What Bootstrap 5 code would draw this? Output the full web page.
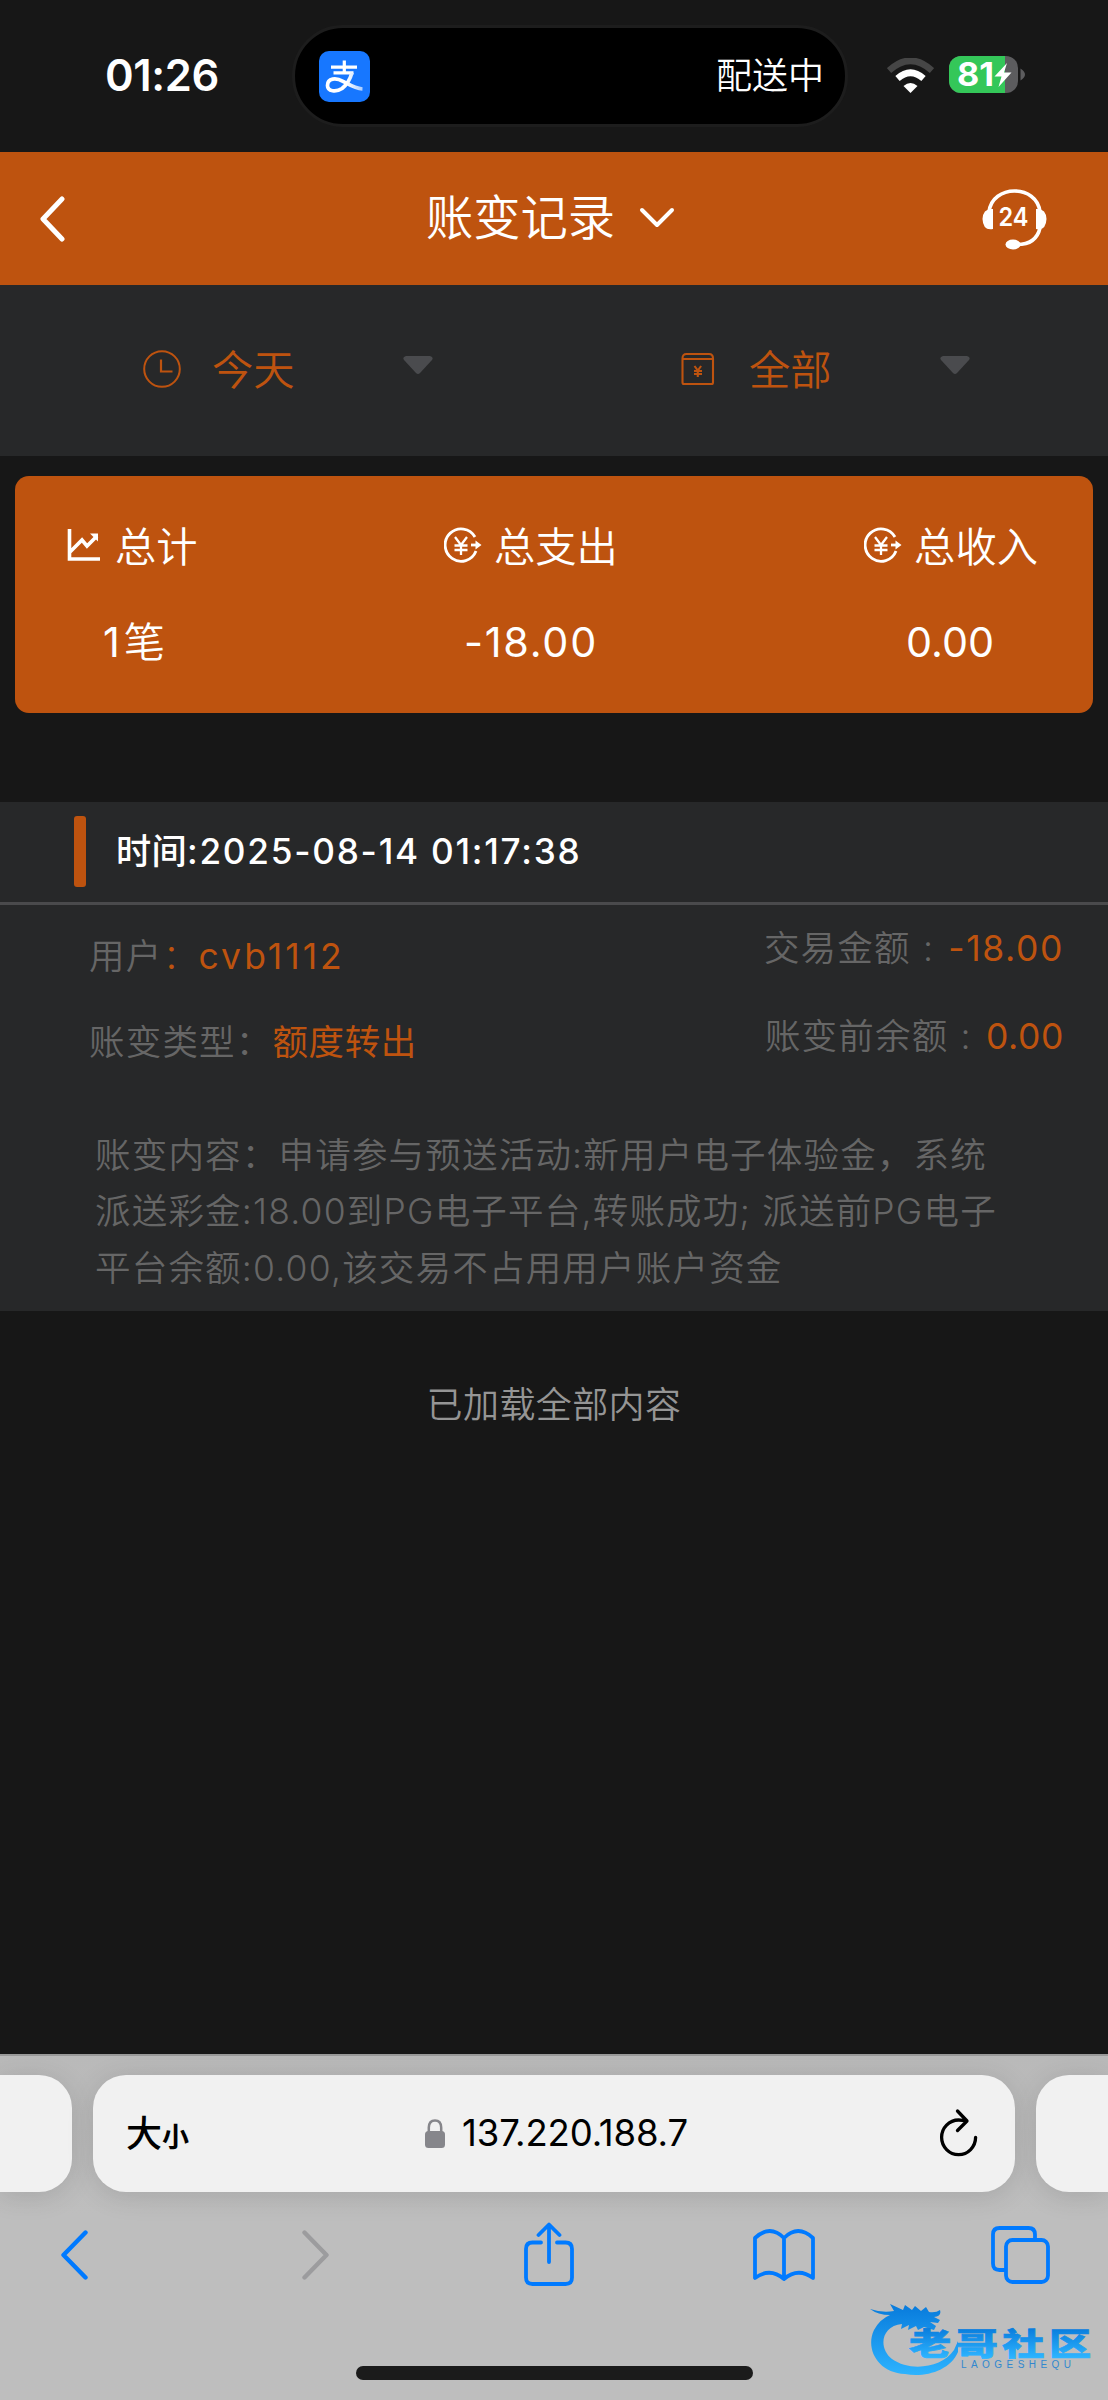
<!DOCTYPE html>
<html lang="zh-CN">
<head>
<meta charset="utf-8">
<meta name="viewport" content="width=device-width, initial-scale=1">
<title>账变记录</title>
<link href="https://cdn.jsdelivr.net/npm/bootstrap@5.3.0/dist/css/bootstrap.min.css" rel="stylesheet">
<style>
:root{--brand:#be530f;--panel:#272829;--page:#171717;--dim:#666;--ios:#007aff}
body{font-family:Inter,"Noto Sans CJK SC",sans-serif;background:var(--page);color:#fff;height:2400px;font-weight:350;overflow:hidden}
svg{display:block;flex:none}
.statusbar{height:152px;padding-left:105px}
.clock-text{font-size:43.5px;font-weight:600;line-height:1;width:187px;letter-spacing:-.4px}
.island{width:556px;height:102px;border:3px solid #1d1d1d;border-radius:51px;background:#000;padding:0 21px 0 24px;font-size:36px}
.topbar{height:133px;background:var(--brand);padding:0 61px 0 39px}
.topbar-title{font-size:47.3px;line-height:60px;padding-bottom:2px;margin-left:54px}
.filters{height:170.5px;background:var(--panel);color:var(--brand);font-size:41.3px;line-height:60px}
.filters svg{margin-bottom:2px}
.filter-a{padding-left:143px}
.filter-b{padding-left:127px}
.summary{margin:20.5px 15px 0;height:237px;border-radius:14px;background:var(--brand);font-size:41.3px;line-height:60px;padding:41px 55px 0 52px}
.sum-value{margin-top:35px;font-weight:400}
.record{margin-top:88.5px;height:509px;background:var(--panel);font-size:35.5px;color:var(--dim);letter-spacing:1.2px}
.record-head{height:103px;border-bottom:3px solid #4a4a4c;color:#fff;padding-left:74px;font-weight:500;font-size:35.2px;letter-spacing:1.75px}
.head-mark{width:12px;height:71px;background:var(--brand);border-radius:3px;margin-right:30px}
.pairs{height:196px;padding:24px 44px 0 89px;line-height:56px}
.pairs .line-l{margin-bottom:30px}
.pairs .col-r{margin-top:-8px}
.pairs .line-r{margin-bottom:32px}
.colon{margin:0 3px 0 1px}
.val{color:var(--brand);font-weight:400;letter-spacing:.6px}
.val-wide{letter-spacing:3px}
.val-neg{letter-spacing:1.6px}
.detail{padding:27px 0 0 95px;line-height:56.5px;white-space:nowrap}
.loaded{margin-top:66px;font-size:36px;letter-spacing:.4px;line-height:56px;color:#959595}
.browser{height:346px;background:linear-gradient(#b9b9b9,#bebebe 160px);border-top:2px solid #999;padding-top:19px}
.tab-pill{height:117px;background:#f1f1f1;border-radius:33px;box-shadow:0 4px 28px rgba(0,0,0,.12)}
.tab-main{width:922px;color:#000;padding:0 37px 0 33px}
.tab-prev{width:72px;border-radius:0 33px 33px 0}
.tab-next{width:72px;border-radius:33px 0 0 33px}
.host{font-size:36.5px;letter-spacing:-.15px;font-weight:400}
.tools{height:126px;padding:0 0 0 60px}
.home-pill{width:397px;height:14px;border-radius:7px;background:#1b1b1b;margin:48px auto 0}
.site-mark{right:12px;bottom:20px}
</style>
<script src="https://cdn.jsdelivr.net/npm/bootstrap@5.3.0/dist/js/bootstrap.bundle.min.js"></script>
</head>
<body class="d-flex flex-column position-relative">
<svg width="0" height="0" class="position-absolute"><defs>
<symbol id="coin" viewBox="0 0 38 36"><g fill="none" stroke="currentColor" stroke-width="2.8"><path d="M31 10A16 16.2 0 1 0 32 24"/><path d="M11 10l6 8 6-8M17 18v10M10.5 18.5h13M10.5 23h13" stroke-width="2.3"/><path d="M27 18h7"/></g><path d="M31.5 13.5l6 4.5-6 4.5z" fill="currentColor"/></symbol>
<symbol id="caret" viewBox="0 0 30 18"><path d="M3 0h24q4 1 2 4L17 17q-2 2-4 0L1 4Q-1 1 3 0z" fill="#4a4b4e"/></symbol>
</defs></svg>

<header class="statusbar d-flex align-items-center flex-shrink-0">
  <div class="clock-text">01:26</div>
  <div class="island d-flex align-items-center justify-content-between">
    <svg width="51" height="51" viewBox="0 0 51 51"><defs><linearGradient id="fade"><stop offset=".55" stop-color="#fff"/><stop offset="1" stop-color="#a9ccff"/></linearGradient></defs><rect width="51" height="51" rx="10" fill="#1777ff"/><path d="M12 16.200h26M14.500 21.800h20M25.300 9.500v12" stroke="#fff" stroke-width="3.200" fill="none"/><path d="M33 21.500C31 29 27.500 34 23 37.500 17 41.500 8.500 40.500 8.500 34.500 8.500 27 17 26.500 24 30.300 31 34 36 37.500 43.500 38" stroke="url(#fade)" stroke-width="3.700" fill="none"/></svg>
    <span>配送中</span>
  </div>
  <svg class="ms-auto" style="margin-right:15px" width="47" height="36" viewBox="0 0 47 36"><path d="M2 12.500Q23.500-7 45 12.500" fill="none" stroke="#464646" stroke-width="6.500"/><path d="M10.500 20.500Q23.500 9 36.500 20.500" fill="none" stroke="#fff" stroke-width="6.500"/><path d="M16.500 28Q23.500 22 30.500 28L23.500 35z" fill="#fff"/></svg>
  <svg style="margin-right:83px;margin-bottom:3px" width="76" height="37" viewBox="0 0 76 37"><defs><clipPath id="cell"><rect width="69" height="37" rx="12"/></clipPath></defs><g clip-path="url(#cell)"><path fill="#5c5c5e" d="M0 0h69v37H0z"/><path fill="#34c759" d="M0 0h56v37H0z"/></g><path d="M71.500 12.500q9 6 0 12z" fill="#5c5c5e"/><text x="8" y="30" font-size="32" font-weight="700" fill="#fff" textLength="37" lengthAdjust="spacingAndGlyphs">81</text><path d="M58 7L45.500 20.500h7L49.500 31 62.500 16.500h-7.500z" fill="#fff"/></svg>
</header>

<nav class="topbar d-flex align-items-center justify-content-between flex-shrink-0">
  <svg width="26" height="46" viewBox="0 0 26 46"><path d="M23 3L4 23l19 20" fill="none" stroke="#fff" stroke-width="5" stroke-linecap="round" stroke-linejoin="round"/></svg>
  <div class="d-flex align-items-center topbar-title"><span>账变记录</span><svg style="margin-left:24px" width="36" height="22" viewBox="0 0 36 22"><path d="M3 3l15 15L33 3" fill="none" stroke="#fff" stroke-width="4" stroke-linecap="round" stroke-linejoin="round"/></svg></div>
  <svg width="65" height="62" viewBox="0 0 65 62"><path d="M7 24C10-4 55-4 58 24M58 40Q54 57 34 56.500" fill="none" stroke="#fff" stroke-width="3.600"/><path d="M11 21v20Q1 43 .5 31 1 20 11 21zM54 21v20Q64 43 64.500 31 64 20 54 21z" fill="#fff"/><ellipse cx="31" cy="56.500" rx="7.500" ry="5" fill="#fff"/><text x="16.500" y="37.500" font-size="26" font-weight="600" fill="#fff" textLength="30" lengthAdjust="spacingAndGlyphs">24</text></svg>
</nav>

<section class="filters row g-0 align-items-center flex-shrink-0">
  <div class="col-6 d-flex align-items-center filter-a">
    <svg width="38" height="38" viewBox="0 0 38 38"><circle cx="19" cy="19" r="17.800" fill="none" stroke="#be530f" stroke-width="2"/><path d="M18 9.500v12h11.500" fill="none" stroke="#be530f" stroke-width="2.200"/></svg>
    <span style="margin-left:31px">今天</span><svg style="margin-left:108px;margin-bottom:11px" width="30" height="18"><use href="#caret"/></svg>
  </div>
  <div class="col-6 d-flex align-items-center filter-b">
    <svg width="34" height="34" viewBox="0 0 34 34"><path d="M1.500 6.500q0-4.500 4-4.500h22.500q4 0 4 4.500v24q0 1.500-1.500 1.500h-27.500q-1.500 0-1.500-1.500zM2 7h30M13.500 14l3.300 4.500 3.300-4.500M16.800 18.500v6.500M13 19h8M13 22h8" fill="none" stroke="#be530f" stroke-width="2.100"/></svg>
    <span style="margin-left:34px">全部</span><svg style="margin-left:108px;margin-bottom:11px" width="30" height="18"><use href="#caret"/></svg>
  </div>
</section>

<section class="summary d-flex justify-content-between flex-shrink-0">
  <div><div class="d-flex align-items-center"><svg style="margin:0 15px 4px 0" width="33" height="33" viewBox="0 0 33 33"><path d="M2.500 0v30H33M3 23l12-12 5 6 10-10" fill="none" stroke="#fff" stroke-width="3.600"/><path d="M23 4.500h8v8z" fill="#fff"/></svg>总计</div><div class="sum-value" style="padding-left:36px"><span style="letter-spacing:4px">1</span><span style="font-weight:350">笔</span></div></div>
  <div><div class="d-flex align-items-center"><svg style="margin:0 12px 4px 0" width="38" height="36"><use href="#coin"/></svg>总支出</div><div class="sum-value" style="padding-left:20px;letter-spacing:1.8px">-18.00</div></div>
  <div><div class="d-flex align-items-center"><svg style="margin:0 12px 4px 0" width="38" height="36"><use href="#coin"/></svg>总收入</div><div class="sum-value" style="padding-left:42px">0.00</div></div>
</section>

<section class="record flex-shrink-0">
  <div class="record-head d-flex align-items-center"><span class="head-mark"></span><span style="letter-spacing:.3px">时间</span>:2025-08-14 01:17:38</div>
  <div class="pairs d-flex justify-content-between">
    <div><div class="line-l">用户<span class="val"><span class="fw-light">：</span><span class="val-wide">cvb1112</span></span></div><div>账变类型：<span class="val">额度转出</span></div></div>
    <div class="col-r text-end"><div class="line-r">交易金额 <span class="colon">:</span> <span class="val val-neg">-18.00</span></div><div>账变前余额 <span class="colon">:</span> <span class="val">0.00</span></div></div>
  </div>
  <div class="detail">账变内容：申请参与预送活动:新用户电子体验金，系统<br>派送彩金:18.00到PG电子平台,转账成功; 派送前PG电子<br>平台余额:0.00,该交易不占用用户账户资金</div>
</section>
<div class="loaded text-center flex-shrink-0">已加载全部内容</div>

<footer class="browser mt-auto flex-shrink-0">
  <div class="d-flex justify-content-between">
    <div class="tab-pill tab-prev"></div>
    <div class="tab-pill tab-main d-flex align-items-center justify-content-between">
      <div class="fw-medium" style="font-size:36px">大<span style="font-size:27px;font-weight:700">小</span></div>
      <div class="d-flex align-items-center" style="margin-left:-14px"><svg style="margin-right:17px" width="20" height="29" viewBox="0 0 20 29"><rect y="12" width="20" height="17" rx="3.500" fill="#86868b"/><path d="M3.800 13V8.500Q4 1.500 10 1.500T16.200 8.500V13" fill="none" stroke="#86868b" stroke-width="2.500"/></svg><span class="host">137.220.188.7</span></div>
      <svg width="40" height="52" viewBox="0 0 40 52"><path d="M28.500 13.500Q24.500 12 20.600 12A17 17.300 0 1 0 37.600 29.300M19.500 3l9.500 10-9.500 9.500" fill="none" stroke="#000" stroke-width="3.300" stroke-linecap="round" stroke-linejoin="round"/></svg>
    </div>
    <div class="tab-pill tab-next"></div>
  </div>
  <div class="tools d-flex align-items-center">
    <svg width="28" height="50" viewBox="0 0 28 50"><path d="M25.500 2.500L3.500 25l22 22.500" fill="none" stroke="#007aff" stroke-width="4.400" stroke-linecap="round" stroke-linejoin="round"/></svg>
    <svg width="28" height="50" viewBox="0 0 28 50" style="margin-left:214px"><path d="M2.500 2.500l22 22.500-22 22.500" fill="none" stroke="#9c9c9e" stroke-width="4.400" stroke-linecap="round" stroke-linejoin="round"/></svg>
    <svg width="50" height="64" viewBox="0 0 50 64" style="margin-left:194px;margin-bottom:2px"><path d="M17 20.500H8.500q-6.500 0-6.500 6.500v28.500Q2 62 8.500 62h33q6.500 0 6.500-6.500V27q0-6.500-6.500-6.500H33M25 40V3M14.500 13L25 2.500 35.500 13" fill="none" stroke="#007aff" stroke-width="3.800" stroke-linecap="round" stroke-linejoin="round"/></svg>
    <svg width="62" height="54" viewBox="0 0 62 54" style="margin-left:179px"><path d="M31 51Q17 39 2 50V10Q17-4 31 10 45-4 60 10V50Q45 39 31 51V10" fill="none" stroke="#007aff" stroke-width="3.800" stroke-linejoin="round"/></svg>
    <svg width="59" height="58" viewBox="0 0 59 58" style="margin-left:176px"><path d="M15 44H8.500Q2 44 2 37.500V8.500Q2 2 8.500 2h29Q44 2 44 8.500V14" fill="none" stroke="#007aff" stroke-width="3.800"/><rect x="15" y="14" width="42" height="42" rx="6.500" fill="none" stroke="#007aff" stroke-width="3.800"/></svg>
  </div>
  <div class="home-pill"></div>
</footer>

<svg class="site-mark position-absolute" width="226" height="80" viewBox="0 0 226 80"><defs><linearGradient id="sky" gradientUnits="userSpaceOnUse" x1="0" y1="5" x2="0" y2="76"><stop stop-color="#087bdc"/><stop offset="1" stop-color="#2db4ff"/></linearGradient><linearGradient id="sky2" gradientUnits="userSpaceOnUse" x1="0" y1="-27" x2="0" y2="3"><stop stop-color="#087bdc"/><stop offset="1" stop-color="#2db4ff"/></linearGradient></defs>
<path fill="url(#sky)" d="M0 9q12 4 24 2l-4-7 13 6 2-5 7 5 3-4 6 5 5-4 3 5q7 1 11-2 2 6-6 7l6 3-2 3-8-1 6 4-2 4-10-3-6 3-2-4-8 4 1-5-8 4 1-5C11 26 8 48 22 59c18 13 50 9 62-9l4-9v11c-8 19-34 26-53 22C8 73-5 49 4 30q6-11 16-15Q8 15 0 9z"/>
<text transform="translate(39 54.500) scale(1.36 1)" font-family="Noto Sans CJK SC" font-size="31" font-weight="900" fill="url(#sky2)" stroke="url(#sky2)" stroke-width=".7" textLength="134">老哥社区</text>
<text x="91" y="67.500" font-family="Liberation Sans" font-size="10" fill="#3188cf" textLength="110">LAOGESHEQU</text></svg>
</body>
</html>
